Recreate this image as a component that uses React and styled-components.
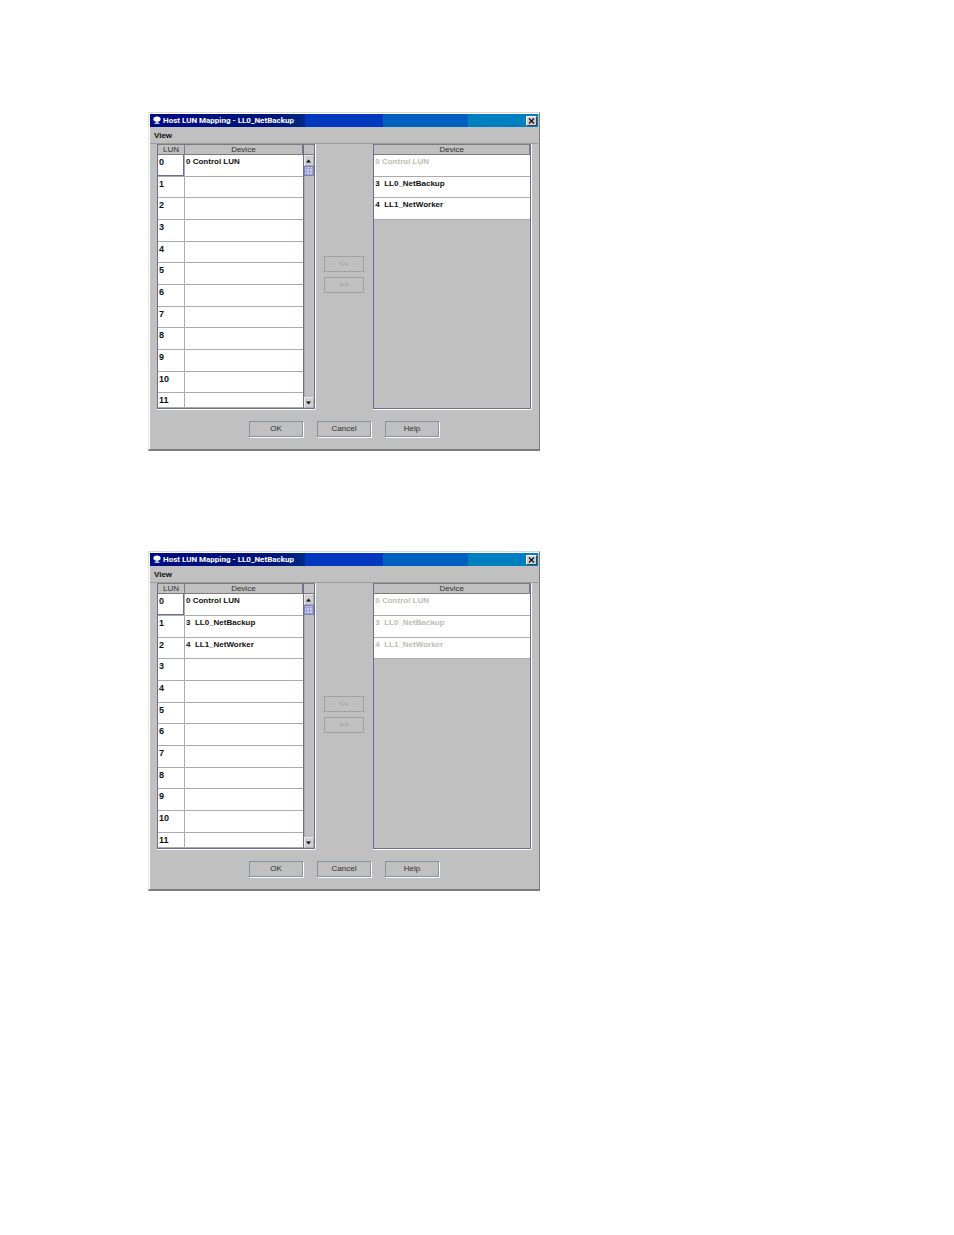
import React from "react";
import styled, { createGlobalStyle } from "styled-components";

const color = {
  face: "#c0c0c0",
  white: "#ffffff",
  dark: "#7c7c7c",
  line: "#a9aca9",
  edge: "#6c6c98",
  text: "#101010",
  header: "#303030",
  disabled: "#b9bdb0",
};

const GlobalStyle = createGlobalStyle`
  * {
    box-sizing: border-box;
  }

  body {
    margin: 0;
    background: #ffffff;
    font-family: "Liberation Sans", Arial, sans-serif;
    font-size: 8px;
    line-height: 10px;
    color: ${color.text};
  }

  button {
    font: inherit;
    color: inherit;
  }
`;

const Page = styled.main`
  display: flex;
  flex-direction: column;
  gap: 100px;
  padding: 112px 148px;
`;

const Window = styled.section`
  width: 100%;
  max-width: 392px;
  background: ${color.face};
  border: 1px solid;
  border-color: #d8d8d8 ${color.dark} ${color.dark} #e4e4e4;
  border-bottom-width: 2px;
  box-shadow: inset 1px 1px 0 ${color.white};
`;

const TitleBar = styled.header`
  display: flex;
  align-items: center;
  gap: 2px;
  height: 13px;
  margin: 1px 1px 0;
  padding: 0 1px 0 3px;
  background: linear-gradient(
    90deg,
    #000c84 0 13%,
    #00127c 13% 31%,
    #002a86 40%,
    #0038c0 40% 60%,
    #0060c0 60% 82%,
    #0080c0 82%
  );
`;

const Title = styled.h1`
  flex: 1;
  margin: 0;
  font-family: Roboto, "Liberation Sans", sans-serif;
  font-size: 8px;
  font-weight: bold;
  color: ${color.white};
  white-space: nowrap;
`;

const CloseButton = styled.button`
  display: flex;
  align-items: center;
  justify-content: center;
  width: 11px;
  height: 10px;
  padding: 0;
  background: #d0d0d0;
  border: 1px solid;
  border-color: ${color.white} #404040 #404040 ${color.white};
`;

const MenuBar = styled.nav`
  display: flex;
  align-items: center;
  height: 17px;
  margin: 0 1px;
  padding: 1px 4px 0;
  border-bottom: 1px solid #9a9a9a;
`;

const MenuButton = styled.button`
  padding: 0;
  background: none;
  border: none;
  font-weight: bold;
`;

const Panels = styled.div`
  display: flex;
  padding: 0 8px;
`;

const Panel = styled.div`
  flex: 157;
  display: flex;
  min-width: 0;
  border: 1px solid ${color.edge};
  border-top: none;
  box-shadow: 0 1px 0 ${color.white}, 1px 0 0 ${color.white};
`;

const MoveColumn = styled.div`
  flex: 59;
  display: flex;
  flex-direction: column;
  align-items: center;
  justify-content: center;
  gap: 5px;
  padding-bottom: 4px;
`;

const Table = styled.table`
  flex: 1;
  align-self: flex-start;
  width: 100%;
  border-collapse: separate;
  border-spacing: 0;
  table-layout: fixed;
`;

const HeadCell = styled.th`
  width: ${({ $width }) => $width || "auto"};
  height: 11px;
  padding: 0;
  border: 1px solid ${color.dark};
  border-left: none;
  line-height: 9px;
  font-weight: normal;
  color: ${color.header};
`;

const Row = styled.tr`
  height: 22px;

  &:nth-child(${({ $short }) => $short}) {
    height: 21px;
  }

  &:nth-child(12) {
    height: 15px;
  }
`;

const Cell = styled.td`
  padding: 2px 1px 0;
  vertical-align: top;
  background: ${color.white};
  border-bottom: 1px solid ${color.line};
  font-weight: bold;
  color: ${({ $disabled }) => ($disabled ? color.disabled : "inherit")};
  white-space: pre;
  overflow: hidden;
`;

const LunCell = styled(Cell)`
  border-right: 1px solid ${color.line};
  box-shadow: ${({ $focused }) => ($focused ? `inset -1px -1px 0 ${color.edge}` : "none")};
  font-size: 9px;
`;

const ScrollColumn = styled.div`
  display: flex;
  flex-direction: column;
  width: 11px;
  border-left: 1px solid ${color.edge};
`;

const ScrollCorner = styled.div`
  height: 11px;
  border: 1px solid ${color.dark};
  border-width: 1px 0;
`;

const ScrollButton = styled.button`
  display: flex;
  align-items: center;
  justify-content: center;
  height: 11px;
  padding: 0;
  background: #cfcfcf;
  border: 1px solid;
  border-color: #e8e8e8 ${color.line} ${color.line} #e8e8e8;
`;

const ScrollTrack = styled.div`
  flex: 1;
  box-shadow: inset 1px 0 0 #adadad;
`;

const ScrollThumb = styled.div`
  height: 10px;
  background: radial-gradient(circle at 1px 1px, #c8c8ee 1px, transparent 1px) 2px 2px / 3px 3px #a0a4d0;
  border: 1px solid #7c80b4;
`;

const Actions = styled.footer`
  display: flex;
  justify-content: center;
  gap: 14px;
  padding: 12px 0;
`;

const Button = styled.button`
  width: 54px;
  height: 16px;
  padding: 0;
  background: ${color.face};
  border: 1px solid #8791a3;
  box-shadow: 1px 1px 0 ${color.white};
  font-size: 8px;
  color: ${color.header};
`;

const MoveButton = styled(Button)`
  width: 40px;
  border-color: #a2a2a2;
  box-shadow: none;

  &:disabled {
    color: #969696;
  }
`;

const AppIcon = () => (
  <svg width="8" height="9" viewBox="0 0 8 9" aria-hidden="true">
    <ellipse cx="4" cy="3" rx="3.6" ry="2.6" fill="#fff" />
    <path d="M2.5 5h3v2h1v1h-5V7h1z" fill="#b9c4e8" />
  </svg>
);

const CloseIcon = () => (
  <svg width="7" height="6" viewBox="0 0 7 6" aria-hidden="true">
    <path d="M1 .5l5 5M6 .5l-5 5" stroke="#101010" strokeWidth="1.3" />
  </svg>
);

const Arrow = ({ down }) => (
  <svg width="7" height="4" viewBox="0 0 7 4" aria-hidden="true">
    <path d={down ? "M1 .5h5l-2.5 3z" : "M1 3.5h5l-2.5-3z"} fill="#101010" />
  </svg>
);

const LunTable = ({ mapped, short }) => (
  <Panel>
    <Table>
      <thead>
        <tr>
          <HeadCell $width="27px">LUN</HeadCell>
          <HeadCell>Device</HeadCell>
        </tr>
      </thead>
      <tbody>
        {Array.from({ length: 12 }, (_, lun) => (
          <Row key={lun} $short={short}>
            <LunCell $focused={lun === 0}>{lun}</LunCell>
            <Cell>{mapped[lun]}</Cell>
          </Row>
        ))}
      </tbody>
    </Table>
    <ScrollColumn>
      <ScrollCorner />
      <ScrollButton aria-label="Scroll up">
        <Arrow />
      </ScrollButton>
      <ScrollThumb />
      <ScrollTrack />
      <ScrollButton aria-label="Scroll down">
        <Arrow down />
      </ScrollButton>
    </ScrollColumn>
  </Panel>
);

const DeviceTable = ({ devices, mapped, short }) => (
  <Panel>
    <Table>
      <thead>
        <tr>
          <HeadCell>Device</HeadCell>
        </tr>
      </thead>
      <tbody>
        {devices.map((device) => (
          <Row key={device} $short={short}>
            <Cell $disabled={mapped.includes(device)}>{device}</Cell>
          </Row>
        ))}
      </tbody>
    </Table>
  </Panel>
);

const devices = ["0 Control LUN", "3  LL0_NetBackup", "4  LL1_NetWorker"];

const MappingWindow = ({ mapped, short }) => (
  <Window>
    <TitleBar>
      <AppIcon />
      <Title>Host LUN Mapping - LL0_NetBackup</Title>
      <CloseButton aria-label="Close">
        <CloseIcon />
      </CloseButton>
    </TitleBar>
    <MenuBar>
      <MenuButton>View</MenuButton>
    </MenuBar>
    <Panels>
      <LunTable mapped={mapped} short={short} />
      <MoveColumn>
        <MoveButton disabled>&lt;&lt;</MoveButton>
        <MoveButton disabled>&gt;&gt;</MoveButton>
      </MoveColumn>
      <DeviceTable devices={devices} mapped={mapped} short={short} />
    </Panels>
    <Actions>
      <Button>OK</Button>
      <Button>Cancel</Button>
      <Button>Help</Button>
    </Actions>
  </Window>
);

const App = () => (
  <>
    <GlobalStyle />
    <Page>
      <MappingWindow mapped={devices.slice(0, 1)} short="3n+2" />
      <MappingWindow mapped={devices} short="3n" />
    </Page>
  </>
);

export default App;
